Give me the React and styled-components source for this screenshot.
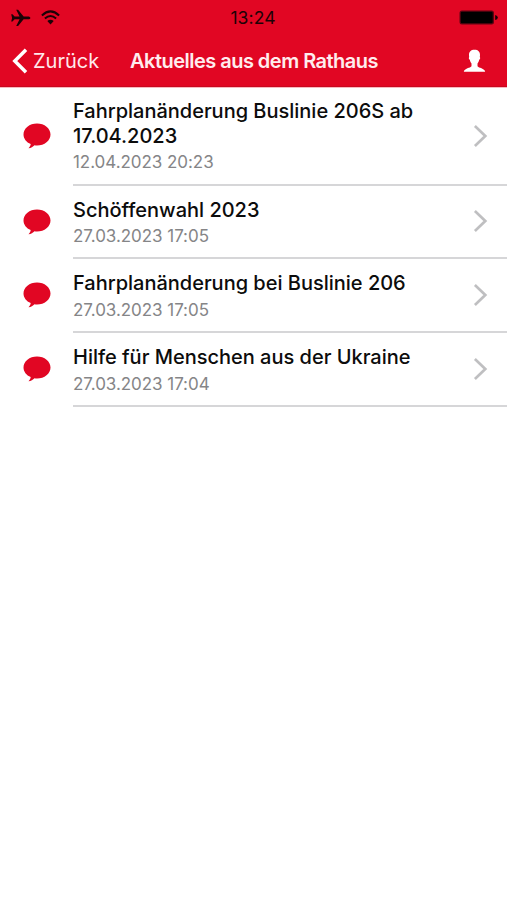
import React from "react";
import styled, { createGlobalStyle } from "styled-components";

const RED = "#e10623";

const GlobalStyle = createGlobalStyle`
  * { box-sizing: border-box; }
  body {
    margin: 0;
    background: #fff;
    font-family: Inter, "Liberation Sans", sans-serif;
  }
`;

const Screen = styled.div`
  width: 100%;
  min-height: 900px;
  background: #fff;
`;

const Header = styled.header`
  height: 88px;
  background: ${RED};
  border-bottom: 1px solid #f9b8c0;
  box-shadow: inset 0 -1px 0 #c8081f;
`;

const StatusBar = styled.div`
  height: 35px;
  display: grid;
  grid-template-columns: 1fr auto 1fr;
  align-items: center;
  padding: 0 9px 0 10px;
  color: #1c0206;
`;

const StatusIcons = styled.div`
  display: flex;
  align-items: center;
  gap: 10px;
  justify-content: ${(p) => (p.$end ? "flex-end" : "flex-start")};
  svg { display: block; }
`;

const Clock = styled.time`
  font-size: 17.5px;
  line-height: 20px;
  letter-spacing: ${(p) => p.$tracking}px;
  padding-right: 2px;
`;

const NavBar = styled.nav`
  height: 52px;
  display: grid;
  grid-template-columns: 130px 1fr 34px;
  align-items: center;
  color: #fff;
`;

const BackButton = styled.button`
  display: flex;
  align-items: center;
  gap: 5px;
  padding: 0 0 0 12px;
  border: 0;
  background: none;
  color: #ffe9ec;
  font: 400 20px/26px Inter, "Liberation Sans", sans-serif;
  letter-spacing: ${(p) => p.$tracking}px;
`;

const PageTitle = styled.h1`
  margin: 0;
  font-size: 20px;
  font-weight: 600;
  line-height: 26px;
  white-space: nowrap;
  letter-spacing: ${(p) => p.$tracking}px;
  color: #ffecee;
`;

const ProfileButton = styled.button`
  justify-self: start;
  display: flex;
  padding: 0;
  border: 0;
  background: none;
  margin-left: -10px;
`;

const List = styled.ul`
  list-style: none;
  margin: 0;
  padding: 0;
`;

const Row = styled.li`
  display: grid;
  grid-template-columns: 73px 1fr;
  height: ${(p) => p.$height}px;
`;

const RowIcon = styled.div`
  display: flex;
  align-items: center;
  padding: 0 0 2px 23px;
`;

const RowBody = styled.div`
  display: flex;
  align-items: center;
  justify-content: space-between;
  padding-right: 19px;
  border-bottom: 2px solid #d6d6d8;
`;

const RowText = styled.div`
  padding-top: ${(p) => (p.$single ? 2 : 0)}px;
`;

const RowTitle = styled.h2`
  margin: 0;
  max-width: 380px;
  font-size: 20px;
  font-weight: 500;
  line-height: 24.5px;
  letter-spacing: ${(p) => p.$tracking}px;
  color: #0c0c0c;
  white-space: pre-line;
`;

const RowDate = styled.time`
  display: block;
  margin-top: 3px;
  font-size: 17px;
  line-height: 22px;
  letter-spacing: ${(p) => p.$tracking}px;
  color: #858587;
`;

const Chevron = styled.svg`
  margin-bottom: 1px;
`;

const Plane = () => (
  <svg width="21" height="18" viewBox="0 0 21 18" fill="#1c0206">
    <path d="M1.200 5.300h1.300L4.600 7.500h5L6.200.8h1.900L13.600 7.500h4.400c1.400 0 2.400.7 2.400 1.400s-1 1.400-2.400 1.400h-4.400L8.100 17H6.200L9.600 10.300h-5L2.500 12.500H1.200L2.100 8.900Z" />
  </svg>
);

const Wifi = () => (
  <svg width="19" height="15" viewBox="0 0 19 15" fill="none" stroke="#1c0206" strokeWidth="2">
    <path d="M.9 5.400Q9.500-2.700 18.100 5.400M3.900 8.600Q9.500 3.400 15.100 8.600" />
    <path d="M6.300 11.100Q9.500 8.300 12.700 11.100L9.500 14.400Z" fill="#1c0206" stroke="none" />
  </svg>
);

const Battery = () => (
  <svg width="39" height="15" viewBox="0 0 39 15">
    <rect x=".5" y=".5" width="34.500" height="14" rx="2.500" fill="#5e0412" />
    <rect x="1.700" y="1.700" width="32" height="11.600" rx="1.200" fill="#000" />
    <path d="M36.200 5q2.600.5 2.600 2.500t-2.600 2.500Z" fill="#180104" />
  </svg>
);

const BackChevron = () => (
  <svg width="16" height="26" viewBox="0 0 16 26" fill="none" stroke="#fff" strokeWidth="3.500">
    <path d="M14 1.700 2.800 13 14 24.300" />
  </svg>
);

const Profile = () => (
  <svg width="23" height="24" viewBox="0 0 23 24" fill="#fff">
    <path d="M11.500.8c3.700 0 5.500 2 5.500 5.200 0 .7-.1 1.300-.2 1.900.7.700.4 2.300-.6 2.800-.4 1.700-1 2.900-1.700 3.700v2.800c1 1.800 7.200 2 7.700 5.500H.8c.5-3.500 6.700-3.700 7.700-5.500v-2.800c-.7-.8-1.300-2-1.700-3.700-1-.5-1.300-2.100-.6-2.800C6.100 7.300 6 6.700 6 6 6 2.800 7.800.8 11.500.8Z" />
  </svg>
);

const Bubble = () => (
  <svg width="28" height="26" viewBox="0 0 28 26" fill={RED}>
    <path d="M14 .4c7.500 0 13.500 4.900 13.500 11S21.500 22.400 14 22.400c-.9 0-1.700-.1-2.500-.2-1.500 1.600-3.500 2.700-6 3.100 1.300-1.300 2-2.700 2.200-4.300C3.400 19.100.5 15.500.5 11.400.5 5.300 6.500.4 14 .4Z" />
  </svg>
);

const Disclosure = () => (
  <Chevron width="15" height="24" viewBox="0 0 15 24" fill="none" stroke="#bfbfc1" strokeWidth="2.700">
    <path d="M1.900 2.100 12.300 12 1.900 21.900" />
  </Chevron>
);

const news = [
  { title: "Fahrplanänderung Buslinie 206S ab\n17.04.2023", date: "12.04.2023 20:23", height: 98 },
  { title: "Schöffenwahl 2023", date: "27.03.2023 17:05", height: 73, single: true },
  { title: "Fahrplanänderung bei Buslinie 206", date: "27.03.2023 17:05", height: 74, single: true },
  { title: "Hilfe für Menschen aus der Ukraine", date: "27.03.2023 17:04", height: 74, single: true },
];

export default function App() {
  return (
    <Screen>
      <GlobalStyle />
      <Header>
        <StatusBar>
          <StatusIcons><Plane /><Wifi /></StatusIcons>
          <Clock $tracking={0.1}>13:24</Clock>
          <StatusIcons $end><Battery /></StatusIcons>
        </StatusBar>
        <NavBar>
          <BackButton $tracking={0}><BackChevron />Zurück</BackButton>
          <PageTitle $tracking={-0.52}>Aktuelles aus dem Rathaus</PageTitle>
          <ProfileButton aria-label="Profil"><Profile /></ProfileButton>
        </NavBar>
      </Header>
      <List>
        {news.map((item) => (
          <Row key={item.title} $height={item.height}>
            <RowIcon><Bubble /></RowIcon>
            <RowBody>
              <RowText $single={item.single}>
                <RowTitle $tracking={-0.01}>{item.title}</RowTitle>
                <RowDate $tracking={-0.05}>{item.date}</RowDate>
              </RowText>
              <Disclosure />
            </RowBody>
          </Row>
        ))}
      </List>
    </Screen>
  );
}
